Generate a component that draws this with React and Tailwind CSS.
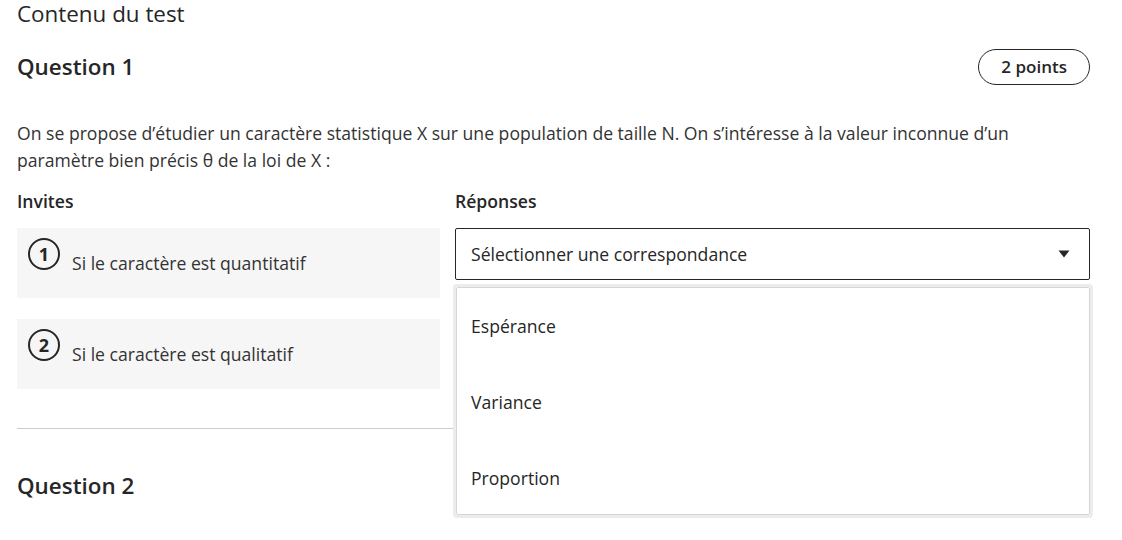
import { useState } from 'react';

const prompts = [
  { n: 1, label: 'Si le caractère est quantitatif' },
  { n: 2, label: 'Si le caractère est qualitatif' },
];

const options = ['Espérance', 'Variance', 'Proportion'];

function Caret() {
  return (
    <svg width="12" height="8" viewBox="0 0 12 8" className="shrink-0">
      <path d="M0.5 0.5h11L6 7.5z" fill="#262626" />
    </svg>
  );
}

function Select({ open, onToggle }) {
  return (
    <div className="relative">
      <button
        onClick={onToggle}
        className="w-full h-[52px] flex items-center justify-between pl-[15px] pr-[19px] border border-[#262626] rounded-[2px] bg-white text-left"
      >
        <span>Sélectionner une correspondance</span>
        <Caret />
      </button>

      {/* menu ouvert */}
      {open && (
        <div className="absolute z-10 top-[56px] left-[-2px] right-[-3px] h-[234px] overflow-hidden bg-white border-[3px] border-[#ececec] rounded-[4px]">
          <ul className="h-full border border-[#d6d6d6] rounded-[2px] flex flex-col pt-[2px]">
            {options.map((o) => (
              <li key={o} className="h-[76px] shrink-0 flex items-center pl-[14px] pb-[4px] leading-[24px]">
                {o}
              </li>
            ))}
          </ul>
        </div>
      )}
    </div>
  );
}

function Points({ value }) {
  return (
    <span className="h-9 px-[22px] flex items-center border border-[#262626] rounded-full text-[17px] font-semibold">
      {value} points
    </span>
  );
}

export default function App() {
  const [open, setOpen] = useState(0);

  return (
    <div className="bg-white text-[#262626] pl-[17px] pr-[32px] h-[540px] overflow-hidden font-['Open_Sans',sans-serif] text-[17.6px]">
      <h1 className="text-[22.4px] leading-[28px] font-normal">Contenu du test</h1>

      <div className="flex items-center justify-between mt-[21px]">
        <h2 className="text-[22.4px] font-semibold leading-[36px]">Question 1</h2>
        <Points value={2} />
      </div>

      <p className="mt-[35px] leading-[27px] text-[#333]">
        On se propose d’étudier un caractère statistique X sur une population de taille N. On s’intéresse à la valeur inconnue d’un
        <br />
        paramètre bien précis θ de la loi de X :
      </p>

      <div className="grid grid-cols-[423px_1fr] gap-x-[15px] mt-[15px]">
        <div className="font-semibold leading-[24px]">Invites</div>
        <div className="font-semibold leading-[24px]">Réponses</div>

        {prompts.map((p, i) => (
          <div key={p.n} className="contents">
            <div className={`h-[70px] bg-[#f6f6f6] flex items-start pl-[11px] pt-[10px] ${i === 0 ? 'mt-[15px]' : 'mt-[21px]'}`}>
              <span className="w-[32px] h-[32px] rounded-full border-2 border-[#262626] flex items-center justify-center text-[18px] font-bold leading-none shrink-0">
                {p.n}
              </span>
              <span className="ml-[12px] mt-[13px] leading-[24px] text-[#333]">{p.label}</span>
            </div>
            <div className={i === 0 ? 'mt-[15px]' : 'mt-[21px]'}>
              <Select open={open === i} onToggle={() => setOpen(open === i ? -1 : i)} />
            </div>
          </div>
        ))}
      </div>

      <hr className="mt-[39px] border-t border-[#cccccc]" />

      <div className="flex items-center justify-between mt-[39px]">
        <h2 className="text-[22.4px] font-semibold leading-[36px]">Question 2</h2>
        <Points value={2} />
      </div>
    </div>
  );
}
